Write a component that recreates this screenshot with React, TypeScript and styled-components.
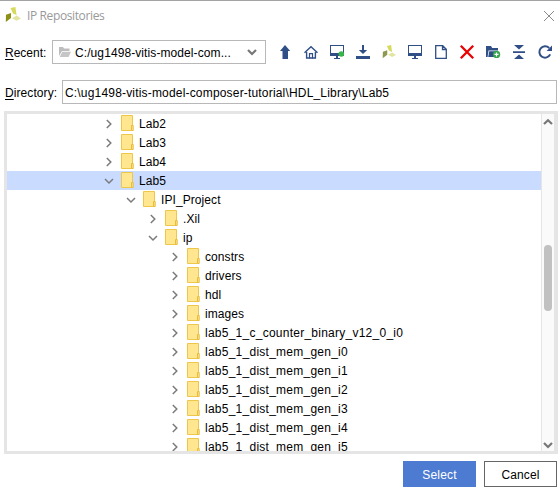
import React from 'react';
import styled, { createGlobalStyle } from 'styled-components';

const Global = createGlobalStyle`
  * { box-sizing: border-box; }
  body { margin: 0; background: #fff; overflow: hidden; }
`;

const Dialog = styled.div`
  width: 560px;
  height: 492px;
  display: flex;
  flex-direction: column;
  background: #fff;
  border-top: 1px solid #a3a3a3;
  font: 12px/16px 'Liberation Sans', Arial, sans-serif;
  color: #000;
  white-space: nowrap;
  overflow: hidden;
`;

const TitleBar = styled.header`
  height: 30px;
  flex: none;
  display: flex;
  align-items: center;
  padding: 0 3px 0 5px;
`;

const Title = styled.h1`
  margin: 0 auto 0 6px;
  font: 12px/16px 'Open Sans', 'Noto Sans', sans-serif;
  letter-spacing: -0.38px;
  color: #999;
`;

const Icon = styled.svg<{ $size?: number; $margin?: string }>`
  display: block;
  flex: none;
  width: ${p => p.$size ?? 16}px;
  height: ${p => p.$size ?? 16}px;
  margin: ${p => p.$margin ?? 0};
`;

const FormRow = styled.div<{ $top: number }>`
  display: flex;
  flex: none;
  align-items: center;
  height: 24px;
  margin-top: ${p => p.$top}px;
  padding-right: 3px;
`;

const Label = styled.label<{ $width: number; $spacing?: number }>`
  width: ${p => p.$width}px;
  flex: none;
  padding: 2px 0 0 5px;
  letter-spacing: ${p => p.$spacing ?? 0}px;
  &::first-letter { text-decoration: underline; text-underline-offset: 2px; }
`;

const Select = styled.div`
  width: 214px;
  height: 24px;
  flex: none;
  display: flex;
  align-items: center;
  border: 1px solid #b8b8b8;
  padding: 0 7px 0 6px;
`;

const SelectText = styled.span`
  flex: 1;
  margin-left: 4px;
  padding-top: 2px;
  letter-spacing: 0.09px;
`;

const PathInput = styled.div`
  width: 495px;
  height: 24px;
  border: 1px solid #b8b8b8;
  padding: 4px 2px;
  letter-spacing: 0.18px;
`;

const Toolbar = styled.nav`
  display: flex;
  gap: 10px;
  margin-left: 11px;
`;

const TreeFrame = styled.section`
  height: 343px;
  flex: none;
  display: flex;
  margin: 7px 2px 0 4px;
  border: 3px solid #e5e5e5;
  border-right-width: 4px;
`;

const Tree = styled.ul`
  list-style: none;
  flex: 1;
  margin: 0;
  padding: 0;
  overflow: hidden;
`;

const TreeRow = styled.li<{ $depth: number; $selected?: boolean }>`
  display: flex;
  align-items: center;
  height: 19px;
  padding-left: ${p => 96 + p.$depth * 22}px;
  background: ${p => (p.$selected ? '#c9dcff' : 'transparent')};
`;

const FolderShape = styled.svg`
  width: 14px;
  height: 18px;
  margin: 0 5px 0 5px;
  flex: none;
  align-self: flex-start;
`;

const TreeLabel = styled.span<{ $wide?: boolean }>`
  padding-top: 1px;
  letter-spacing: ${p => (p.$wide ? 0.25 : 0.08)}px;
`;

const ScrollTrack = styled.div`
  width: 13px;
  display: flex;
  flex-direction: column;
  align-items: center;
  padding-top: 2px;
  border-left: 1px solid #e5e5e5;
  background: #fafafa;
`;

const ScrollThumb = styled.div`
  width: 8px;
  height: 66px;
  margin-top: 117px;
  margin-bottom: auto;
  border-radius: 4px;
  background: #c1c1c1;
`;

const Footer = styled.footer`
  display: flex;
  justify-content: flex-end;
  gap: 8px;
  padding: 7px 3px 0 0;
`;

const Button = styled.button<{ $primary?: boolean }>`
  width: 73px;
  height: 26px;
  padding: 2px 0 0;
  font: inherit;
  letter-spacing: ${p => (p.$primary ? 0.15 : 0.1)}px;
  color: ${p => (p.$primary ? '#fff' : '#000')};
  background: ${p => (p.$primary ? '#4d7bd1' : '#fff')};
  border: 1px solid ${p => (p.$primary ? '#4d7bd1' : '#666')};
`;

const NAVY = '#304f86';

const Logo = ({ size = 16, faded = false, margin }: { size?: number; faded?: boolean; margin?: string }) => (
  <Icon $size={size} $margin={margin} viewBox="0 0 16 16">
    <path d="M5.5 1 10.4 0 11.5 8 8 6.4z" fill="#d5da5c" />
    <path d="M1 7.8 6 6v5L.8 15z" fill={faded ? '#8d9951' : '#8c9116'} />
    <path d="M7 11.2 11.7 8.5 16 11.5 11.5 13.8z" fill="#e2e5a0" />
  </Icon>
);

const Monitor = ({ online = false }: { online?: boolean }) => (
  <Icon viewBox="0 0 16 16">
    <path d="M1 1h14v11H1zM2 2v7h12V2z" fill={NAVY} fillRule="evenodd" />
    <path d="M7 12h2v2h2v1H5v-1h2z" fill={NAVY} />
    {online && <circle cx="12.3" cy="10" r="2.8" fill="#39b54a" />}
  </Icon>
);

const Chevron = ({ dir, heavy }: { dir: 'up' | 'down' | 'right'; heavy?: boolean }) => (
  <Icon $size={12} viewBox="0 0 12 12">
    <path
      d={
        dir === 'right'
          ? 'M3.8 2 7.8 6 3.8 10'
          : dir === 'up'
            ? 'M2 8 6 4.2 10 8'
            : 'M2 4 6 8 10 4'
      }
      fill="none"
      stroke={heavy ? '#777' : '#7b7b7b'}
      strokeWidth={heavy ? 2.2 : 1.5}
    />
  </Icon>
);

const Folder = () => (
  <FolderShape viewBox="0 0 14 18">
    <path d="M1.5 1.5h11v15h-11z" fill="#ffe68f" stroke="#edc64a" />
    <path d="M11.5 11.5h1.7v5h-1.7z" fill="#ffe28a" stroke="#e8bd3c" />
  </FolderShape>
);

type Node = { name: string; depth: number; open?: boolean; selected?: boolean };

const NODES: Node[] = [
  { name: 'Lab2', depth: 0 },
  { name: 'Lab3', depth: 0 },
  { name: 'Lab4', depth: 0 },
  { name: 'Lab5', depth: 0, open: true, selected: true },
  { name: 'IPI_Project', depth: 1, open: true },
  { name: '.Xil', depth: 2 },
  { name: 'ip', depth: 2, open: true },
  { name: 'constrs', depth: 3 },
  { name: 'drivers', depth: 3 },
  { name: 'hdl', depth: 3 },
  { name: 'images', depth: 3 },
  { name: 'lab5_1_c_counter_binary_v12_0_i0', depth: 3 },
  { name: 'lab5_1_dist_mem_gen_i0', depth: 3 },
  { name: 'lab5_1_dist_mem_gen_i1', depth: 3 },
  { name: 'lab5_1_dist_mem_gen_i2', depth: 3 },
  { name: 'lab5_1_dist_mem_gen_i3', depth: 3 },
  { name: 'lab5_1_dist_mem_gen_i4', depth: 3 },
  { name: 'lab5_1_dist_mem_gen_i5', depth: 3 },
];

export default function App() {
  return (
    <>
      <Global />
      <Dialog>
        <TitleBar>
          <Logo margin="0 0 2px" />
          <Title>IP Repositories</Title>
          <Icon viewBox="0 0 16 16">
            <path d="m3 3 10 10m0-10L3 13" stroke="#8a8a8a" fill="none" />
          </Icon>
        </TitleBar>

        <FormRow $top={9}>
          <Label $width={52}>Recent:</Label>
          <Select>
            <Icon $size={12} viewBox="0 0 12 12">
              <path d="M0 10V1h4l1 1.5h5.5V5H3z" fill="#bdbdbd" />
              <path d="M3.2 5.8H12L9.6 11H.8z" fill="#c6c6c6" />
            </Icon>
            <SelectText>C:/ug1498-vitis-model-com...</SelectText>
            <Chevron dir="down" heavy />
          </Select>
          <Toolbar>
            <Icon viewBox="0 0 16 16">
              <path d="M8 1 13.2 7H11v8H5.5V7H3z" fill={NAVY} />
            </Icon>
            <Icon viewBox="0 0 16 16">
              <path d="M1.5 8.8 8 2.8l6.5 6M3.6 8v6h8.8V8" fill="none" stroke={NAVY} strokeWidth="1.4" />
              <path d="M6.5 14.5V9.6h3v4.9" fill="none" stroke={NAVY} strokeWidth="1.2" />
            </Icon>
            <Monitor online />
            <Icon viewBox="0 0 16 16">
              <path d="M7 1h2v5h3.2L8 10 3.8 6H7zM1 12h14v3H1z" fill={NAVY} />
            </Icon>
            <Logo faded size={14} margin="1px" />
            <Monitor />
            <Icon viewBox="0 0 16 16">
              <path d="M2.7 1.7h7l3.6 3.6v9H2.7zM9.5 1.7v3.8h3.8" fill="none" stroke={NAVY} strokeWidth="1.3" />
            </Icon>
            <Icon viewBox="0 0 16 16">
              <path d="m1.8 1.8 12.4 12.4m0-12.4L1.8 14.2" stroke="#e90000" strokeWidth="2.3" />
            </Icon>
            <Icon viewBox="0 0 16 16">
              <path d="M1 13V2h5l1.2 2H13v2.4H3.5L2.6 13z" fill={NAVY} />
              <path d="M4.2 7.2h8.6V13H3.2z" fill={NAVY} />
              <circle cx="11.6" cy="10.4" r="3.6" fill="#36a64a" />
              <path d="M11.5 8.4v4m-2-2h4" stroke="#fff" strokeWidth="1.2" />
            </Icon>
            <Icon viewBox="0 0 16 16">
              <path d="M3 1h10L8 5.6zM2 7.2h12v1.7H2zM8 10.4 13 15H3z" fill={NAVY} />
            </Icon>
            <Icon viewBox="0 0 16 16">
              <path d="M13.2 10.4A5.7 5.7 0 1 1 12.2 4" fill="none" stroke={NAVY} strokeWidth="2" />
              <path d="M15 1.6V7H9.6z" fill={NAVY} />
            </Icon>
          </Toolbar>
        </FormRow>

        <FormRow $top={16}>
          <Label $width={62} $spacing={0.08}>Directory:</Label>
          <PathInput>C:\ug1498-vitis-model-composer-tutorial\HDL_Library\Lab5</PathInput>
        </FormRow>

        <TreeFrame>
          <Tree>
            {NODES.map(n => (
              <TreeRow key={n.name} $depth={n.depth} $selected={n.selected}>
                <Chevron dir={n.open ? 'down' : 'right'} />
                <Folder />
                <TreeLabel $wide={n.name.startsWith('lab5_')}>{n.name}</TreeLabel>
              </TreeRow>
            ))}
          </Tree>
          <ScrollTrack>
            <Chevron dir="up" heavy />
            <ScrollThumb />
            <Chevron dir="down" heavy />
          </ScrollTrack>
        </TreeFrame>

        <Footer>
          <Button $primary>Select</Button>
          <Button>Cancel</Button>
        </Footer>
      </Dialog>
    </>
  );
}
